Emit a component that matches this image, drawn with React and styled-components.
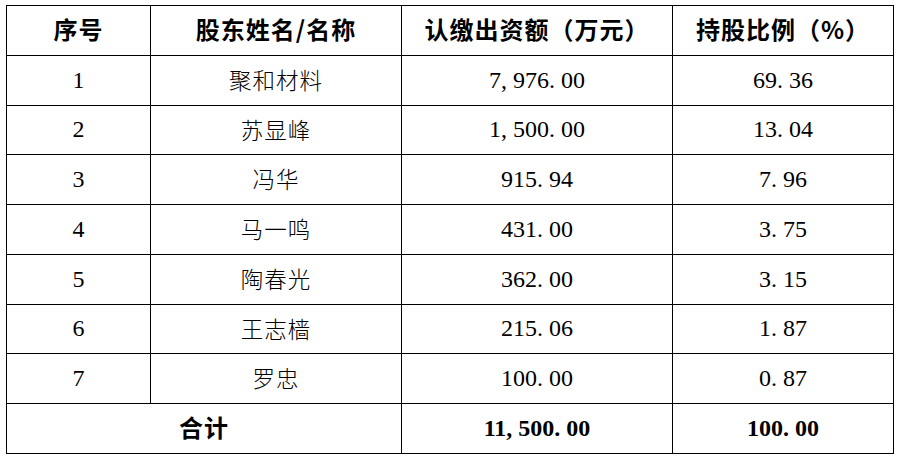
import React from "react";
import styled, { createGlobalStyle } from "styled-components";

// 股东出资表
const ROWS = [
  { no: "1", name: "聚和材料", amount: "7,976.00", ratio: "69.36" },
  { no: "2", name: "苏显峰", amount: "1,500.00", ratio: "13.04" },
  { no: "3", name: "冯华", amount: "915.94", ratio: "7.96" },
  { no: "4", name: "马一鸣", amount: "431.00", ratio: "3.75" },
  { no: "5", name: "陶春光", amount: "362.00", ratio: "3.15" },
  { no: "6", name: "王志樯", amount: "215.06", ratio: "1.87" },
  { no: "7", name: "罗忠", amount: "100.00", ratio: "0.87" },
];

const GlobalStyle = createGlobalStyle`
  body {
    margin: 0;
    background: #fff;
    color: #000;
  }
`;

const Page = styled.div`
  padding: 5px 0 0 6px;
`;

const Table = styled.table`
  border-collapse: collapse;
  table-layout: fixed;
  width: 887px;
`;

const Cell = styled.td`
  border: 1px solid #000;
  height: 46.75px;
  padding: 0 0 2px;
  text-align: center;
  vertical-align: middle;
  font-family: "Noto Sans CJK SC", sans-serif;
  font-size: ${(p) => (p.$bold ? "24px" : "22px")};
  font-weight: ${(p) => (p.$bold ? 700 : 400)};
  letter-spacing: ${(p) => (p.$bold ? "1px" : "0")};
  line-height: 1;
`;

const HeadCell = styled(Cell).attrs({ as: "th" })`
  font-weight: 700;
  font-size: 24px;
  letter-spacing: 1px;
`;

const NameText = styled.span`
  font-family: "Noto Sans CJK SC", sans-serif;
  font-weight: 300;
  font-size: 22.5px;
  letter-spacing: 1px;
`;

const Num = styled.span`
  font-family: "Liberation Serif", serif;
  font-size: 24px;
  font-weight: ${(p) => (p.$bold ? 700 : 400)};
  letter-spacing: 0;
`;

// 宋体式半角标点：逗号和句点占半个字宽
const Punct = styled.span`
  display: inline-block;
  width: 0.5em;
  text-align: left;
`;

const Number = ({ value, bold }) => (
  <Num $bold={bold}>
    {value.split("").map((ch, i) =>
      ch === "," || ch === "." ? <Punct key={i}>{ch}</Punct> : ch
    )}
  </Num>
);

const App = () => {
  return (
    <Page>
      <GlobalStyle />
      <Table>
        <colgroup>
          <col style={{ width: 144 }} />
          <col style={{ width: 251 }} />
          <col style={{ width: 271 }} />
          <col style={{ width: 221 }} />
        </colgroup>
        <thead>
          <tr>
            <HeadCell>序号</HeadCell>
            <HeadCell>股东姓名/名称</HeadCell>
            <HeadCell>认缴出资额（万元）</HeadCell>
            <HeadCell>持股比例（%）</HeadCell>
          </tr>
        </thead>
        <tbody>
          {ROWS.map((r) => (
            <tr key={r.no}>
              <Cell>
                <Number value={r.no} />
              </Cell>
              <Cell>
                <NameText>{r.name}</NameText>
              </Cell>
              <Cell>
                <Number value={r.amount} />
              </Cell>
              <Cell>
                <Number value={r.ratio} />
              </Cell>
            </tr>
          ))}
          <tr>
            <Cell colSpan={2} $bold>
              合计
            </Cell>
            <Cell>
              <Number value="11,500.00" bold />
            </Cell>
            <Cell>
              <Number value="100.00" bold />
            </Cell>
          </tr>
        </tbody>
      </Table>
    </Page>
  );
};

export default App;
